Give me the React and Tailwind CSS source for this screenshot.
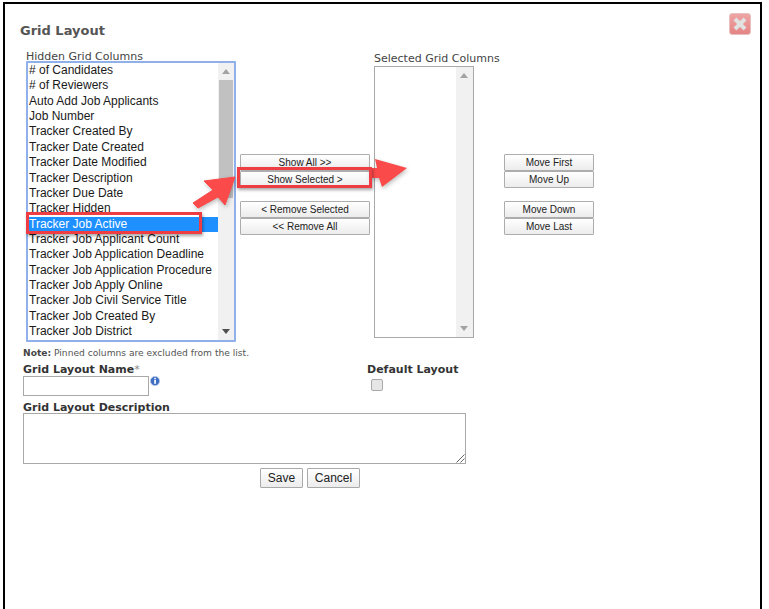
const hidden = ["# of Candidates","# of Reviewers","Auto Add Job Applicants","Job Number","Tracker Created By","Tracker Date Created","Tracker Date Modified","Tracker Description","Tracker Due Date","Tracker Hidden","Tracker Job Active","Tracker Job Applicant Count","Tracker Job Application Deadline","Tracker Job Application Procedure","Tracker Job Apply Online","Tracker Job Civil Service Title","Tracker Job Created By","Tracker Job District"];

function Btn({ children, className = "" }) {
  return (
    <button className={"block h-[17px] w-full rounded-[1px] border border-[#adadad] bg-gradient-to-b from-white to-[#ececec] text-center text-[10px] leading-[15px] text-[#222] font-['Liberation_Sans',sans-serif] " + className}>
      {children}
    </button>
  );
}

function Scroll({ thumb }) {
  return (
    <div className={"relative h-full shrink-0 bg-[#f1f1f1] " + (thumb ? "w-[16px]" : "w-[17px]")}>
      <div className="absolute left-[4px] top-[6px] h-0 w-0 border-x-[4px] border-b-[5px] border-x-transparent border-b-[#a3a3a3]" />
      {thumb && <div className="absolute left-[1px] top-[17px] h-[118px] w-[14px] bg-[#c1c1c1]" />}
      <div className={"absolute bottom-[6px] left-[4px] h-0 w-0 border-x-[4px] border-t-[5px] border-x-transparent " + (thumb ? "border-t-[#505050]" : "border-t-[#a3a3a3]")} />
    </div>
  );
}

export default function App() {
  return (
    <div className="h-[609px] w-[769px] overflow-hidden bg-white pl-[3px] pr-[7px] pt-[2px] font-['DejaVu_Sans',Verdana,sans-serif]">
      <div className="relative h-[640px] border-x-2 border-t-2 border-black">
        <h1 className="pl-[15px] pt-[19px] text-[13px] font-bold leading-[16px] text-[#555]">Grid Layout</h1>
        <div className="absolute right-[9px] top-[9px] flex h-[22px] w-[22px] items-center justify-center rounded-[3px] border border-[#e8c0c0] bg-gradient-to-b from-[#eda5a5] to-[#e58484]">
          <svg width="16" height="16" viewBox="0 0 16 16"><path d="M3 3 13 13M13 3 3 13" stroke="#e2e2e2" strokeWidth="4" /></svg>
        </div>

        <div className="ml-[21px] mt-[10px] flex items-start">
          <div className="w-[210px]">
            <div className="h-[12px] text-[11px] leading-[16px] text-[#444]">Hidden Grid Columns</div>
            <div className="flex h-[281px] w-[210px] rounded-[1px] border-2 border-[#8fb0ea] bg-white font-['Liberation_Sans',sans-serif]">
              <div className="min-w-0 flex-1 overflow-hidden">
                {hidden.map((t) => (
                  <div key={t} className={"h-[15.37px] whitespace-nowrap pl-[1px] text-[12px] leading-[15px] " + (t === "Tracker Job Active" ? "bg-[#1e90ff] text-white" : "text-[#1a1a1a]")}>{t}</div>
                ))}
              </div>
              <Scroll thumb />
            </div>
          </div>

          <div className="ml-[4px] mt-[105px] w-[130px]">
            <Btn>Show All &gt;&gt;</Btn>
            <Btn>Show Selected &gt;</Btn>
            <Btn className="mt-[13px]">&lt; Remove Selected</Btn>
            <Btn>&lt;&lt; Remove All</Btn>
          </div>

          <div className="ml-[4px] mt-[4px] w-[126px]">
            <div className="h-[13px] whitespace-nowrap text-[11px] leading-[12px] text-[#444]">Selected Grid Columns</div>
            <div className="flex h-[272px] w-[100px] justify-end border border-[#a9a9a9] bg-white">
              <Scroll />
            </div>
          </div>

          <div className="ml-[4px] mt-[105px] w-[90px]">
            <Btn>Move First</Btn>
            <Btn>Move Up</Btn>
            <Btn className="mt-[13px]">Move Down</Btn>
            <Btn>Move Last</Btn>
          </div>
        </div>

        <p className="ml-[18px] mt-[5px] text-[9.15px] leading-[12px] text-[#555]"><b className="text-[#444]">Note:</b> Pinned columns are excluded from the list.</p>

        <div className="ml-[18px] mt-[4px] flex items-start">
          <div className="w-[344px]">
            <label className="block h-[13px] text-[11px] font-bold leading-[14px] text-[#333]">Grid Layout Name<span className="font-normal text-[#888]">*</span></label>
            <div className="flex items-start">
              <div className="h-[20px] w-[126px] border border-[#a9a9a9] bg-white" />
              <svg className="ml-[1px]" width="10" height="10" viewBox="0 0 10 10">
                <circle cx="5" cy="5" r="4.6" fill="#3f6fc4" stroke="#b6c6e4" strokeWidth="0.8" />
                <rect x="4.2" y="4" width="1.7" height="3.8" fill="#fff" />
                <rect x="4.2" y="1.8" width="1.7" height="1.5" fill="#fff" />
              </svg>
            </div>
          </div>
          <div>
            <label className="block text-[11px] font-bold leading-[14px] text-[#333]">Default Layout</label>
            <div className="ml-[4px] mt-[2px] h-[12px] w-[12px] rounded-[2px] border border-[#a9a9a9] bg-[#e6e6e6]" />
          </div>
        </div>

        <label className="ml-[18px] mt-[5px] block h-[12px] text-[11px] font-bold leading-[14px] text-[#333]">Grid Layout Description</label>
        <div className="relative ml-[18px] h-[51px] w-[443px] border border-[#a9a9a9] bg-white">
          <svg className="absolute bottom-0 right-0" width="10" height="10" viewBox="0 0 10 10"><path d="M1.5 9.5 9.5 1.5M5.5 9.5 9.5 5.5" stroke="#666" strokeWidth="1" /></svg>
        </div>

        <div className="ml-[255px] mt-[4px] flex gap-[4px] font-['Liberation_Sans',sans-serif] text-[12px] text-[#222]">
          <button className="h-[20px] w-[43px] rounded-[1px] border border-[#a9a9a9] bg-gradient-to-b from-white to-[#ececec] leading-[18px]">Save</button>
          <button className="h-[20px] w-[53px] rounded-[1px] border border-[#a9a9a9] bg-gradient-to-b from-white to-[#ececec] leading-[18px]">Cancel</button>
        </div>

        {/* annotation overlays */}
        <div className="pointer-events-none absolute left-[21px] top-[208px] h-[22px] w-[176px] border-[3px] border-[#ee3d43] shadow-[1px_2px_3px_rgba(0,0,0,0.35)]" />
        <svg className="pointer-events-none absolute left-[185px] top-[170px] drop-shadow-[1px_2px_2px_rgba(0,0,0,0.25)]" width="50" height="40" viewBox="0 0 50 40">
          <path d="M45 3 14 7 23 16 3 29 8 34 28 23 35 31Z" fill="#fa4a4a" stroke="#fa4a4a" strokeWidth="1" strokeLinejoin="round" />
        </svg>
        <svg className="pointer-events-none absolute left-[364px] top-[152px] drop-shadow-[1px_2px_2px_rgba(0,0,0,0.25)]" width="42" height="36" viewBox="0 0 42 36">
          <path d="M38 12 6 3 8 12 0 12 0 22 10 22 13 31Z" fill="#fa4a4a" />
        </svg>
        <div className="pointer-events-none absolute left-[232px] top-[163px] h-[21px] w-[135px] border-[3px] border-[#ee3d43] shadow-[1px_2px_3px_rgba(0,0,0,0.35)]" />
      </div>
    </div>
  );
}
